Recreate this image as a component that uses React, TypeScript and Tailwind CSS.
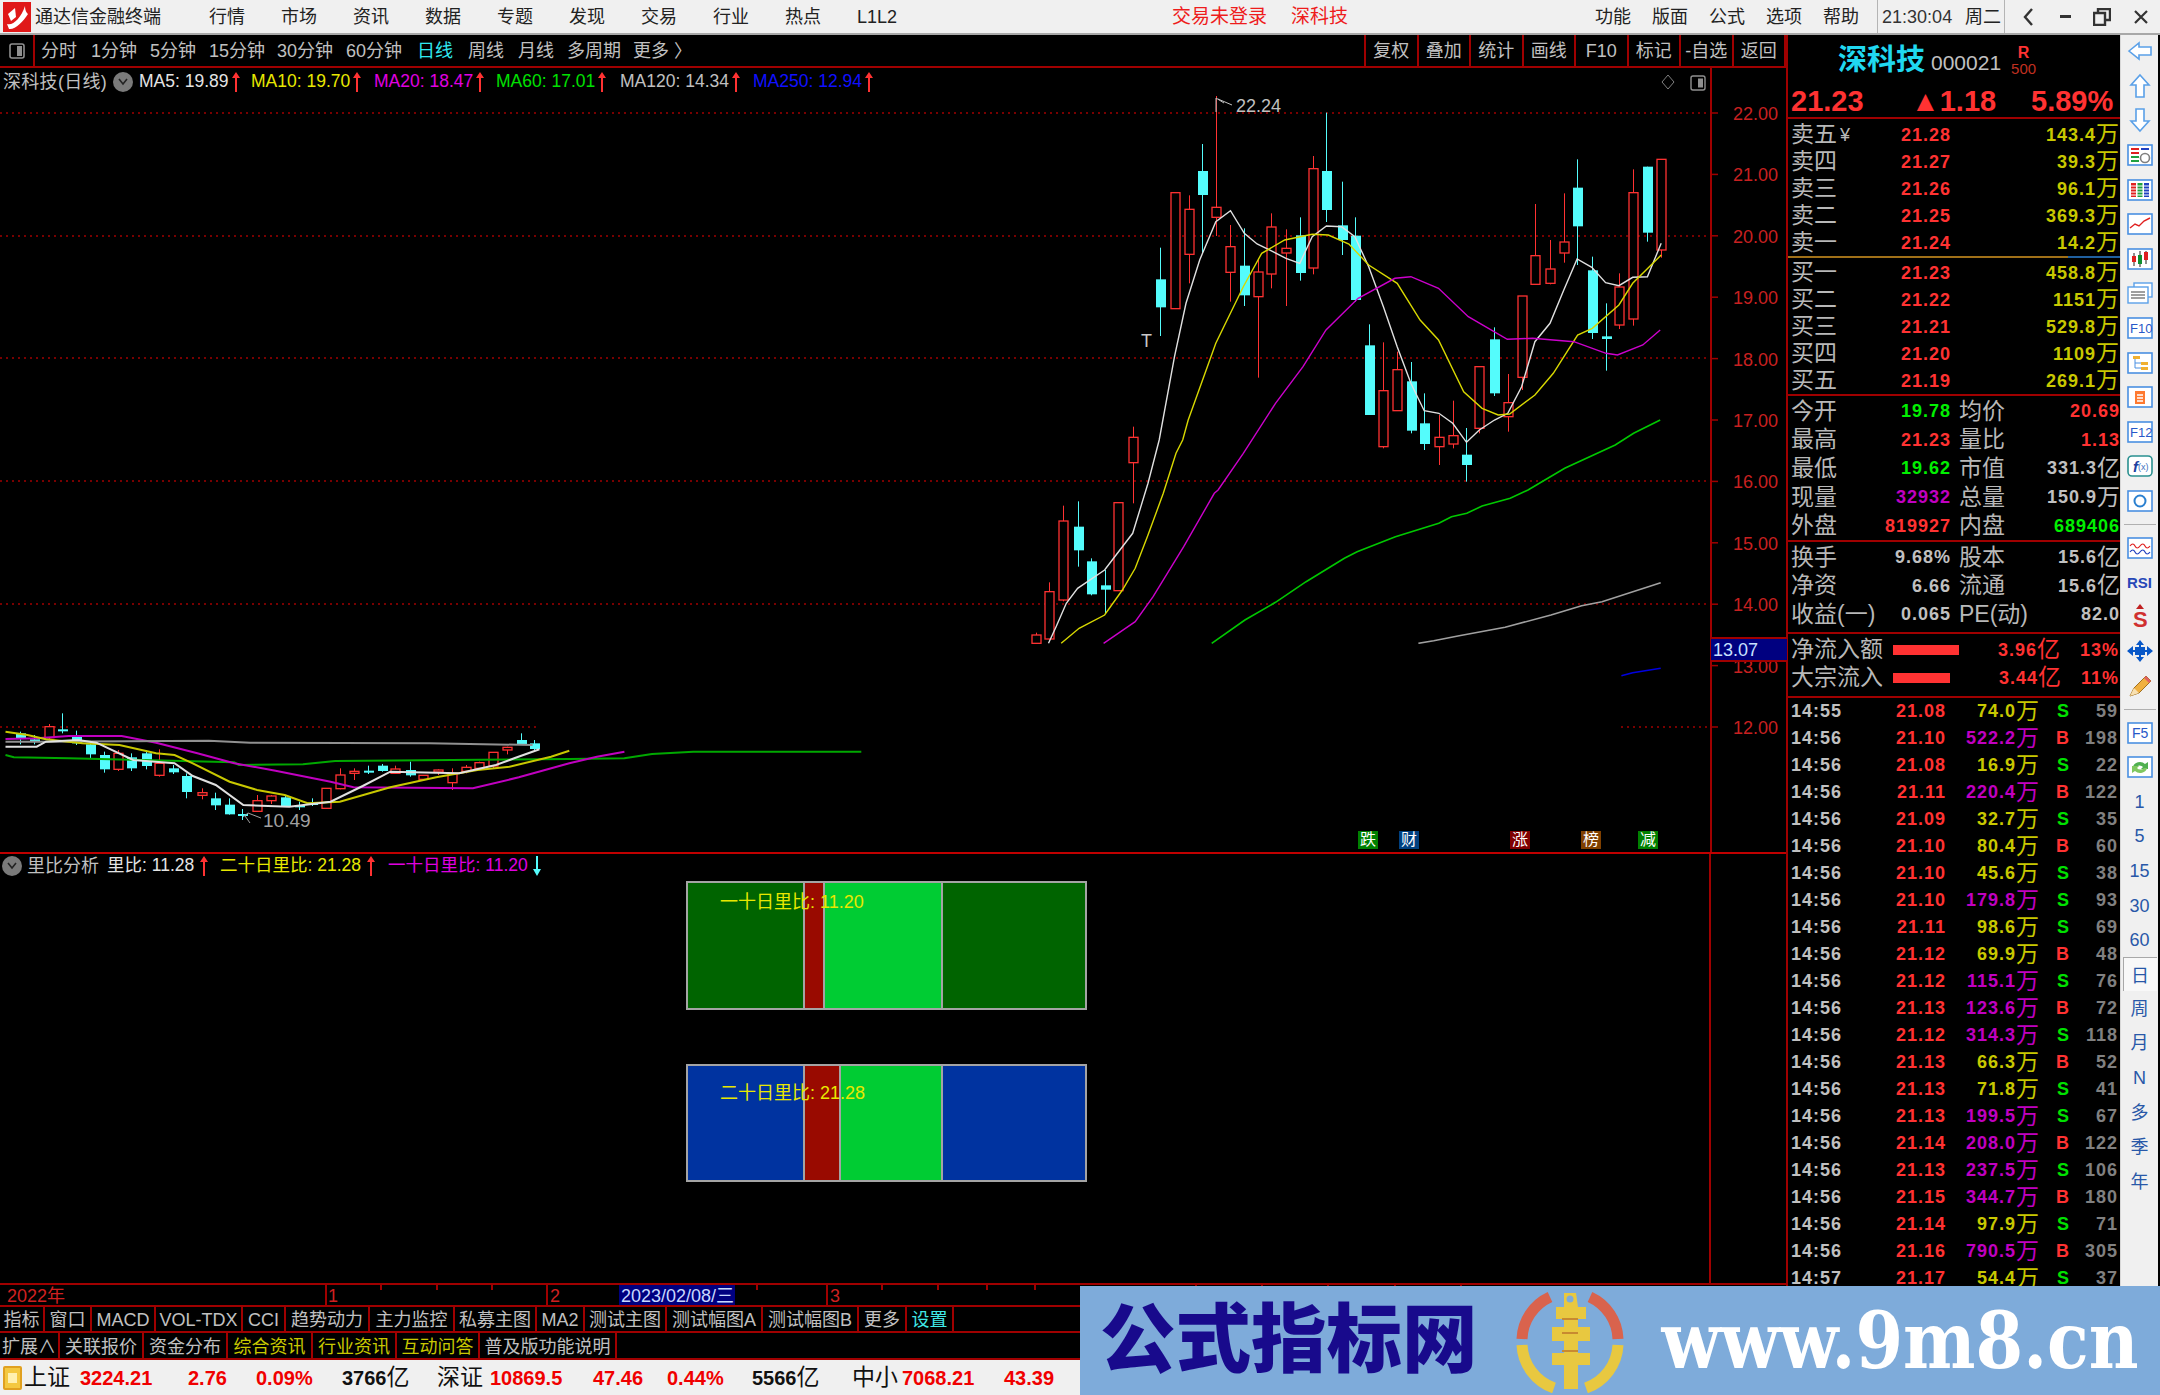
import type { ReactNode } from "react";

const RED_LINE = "border-[#a00000]";
const z4 = (p: number[]) => [1000 + p[0] / 2.178, 90 + p[1] / 3];
const z5 = (p: number[]) => [1000 + p[0] / 1.96, 440 + p[1] / 3];
const z6 = (p: number[]) => [p[0] / 2.178, 700 + p[1] / 3];
const pts = (list: number[][]) => list.map((p) => `${p[0].toFixed(1)},${p[1].toFixed(1)}`).join(" ");

type Candle = [number, number, number, number, number, "r" | "c"];

const upper: Candle[] = [
  [349, 473, 568, 652, 738, "c"], [381, 308, 308, 656, 656, "r"], [411, 316, 358, 493, 580, "r"],
  [440, 162, 243, 315, 490, "c"], [470, 18, 352, 382, 438, "r"], [502, 405, 470, 547, 635, "r"],
  [532, 415, 527, 616, 648, "c"], [562, 505, 546, 620, 863, "r"], [591, 370, 411, 552, 595, "r"],
  [623, 418, 475, 489, 648, "r"], [653, 382, 436, 549, 572, "c"], [682, 198, 236, 534, 553, "r"],
  [711, 68, 243, 360, 396, "c"], [744, 275, 406, 450, 495, "c"], [773, 382, 437, 630, 635, "c"],
  [803, 703, 766, 975, 975, "c"], [835, 757, 902, 1070, 1075, "r"], [865, 785, 839, 962, 962, "r"],
  [895, 816, 874, 1022, 1030, "c"], [924, 910, 1000, 1062, 1080, "c"], [956, 975, 1042, 1070, 1125, "r"],
  [986, 932, 1037, 1062, 1075, "r"], [1016, 1014, 1094, 1125, 1175, "c"], [1044, 830, 830, 1015, 1030, "r"],
  [1077, 712, 748, 910, 918, "c"], [1106, 852, 938, 980, 1025, "r"], [1136, 618, 618, 862, 900, "r"],
  [1165, 342, 497, 583, 583, "r"], [1198, 450, 537, 580, 583, "r"], [1228, 310, 456, 489, 518, "r"],
  [1257, 208, 293, 409, 525, "c"], [1289, 500, 541, 729, 747, "c"], [1319, 640, 739, 747, 842, "c"],
  [1348, 550, 591, 705, 717, "r"], [1378, 238, 308, 687, 707, "r"], [1410, 230, 230, 428, 455, "c"],
  [1440, 208, 208, 480, 503, "r"], [290, 1010, 1042, 1118, 1240, "r"],
];

const upperEarly: Candle[] = [
  [70, 578, 585, 610, 610, "r"], [96, 427, 455, 597, 598, "r"], [123, 197, 243, 480, 484, "r"],
  [152, 184, 260, 331, 380, "c"], [179, 355, 364, 463, 466, "c"], [206, 390, 436, 449, 520, "c"],
  [231, 188, 188, 452, 453, "r"],
];

const lower: Candle[] = [
  [43, 95, 100, 115, 133, "c"], [73, 105, 118, 125, 133, "c"], [106, 72, 80, 113, 117, "r"],
  [135, 40, 88, 94, 100, "c"], [165, 92, 110, 130, 135, "c"], [197, 125, 133, 163, 175, "c"],
  [227, 155, 165, 208, 218, "c"], [256, 150, 160, 208, 213, "r"], [285, 160, 172, 205, 213, "c"],
  [318, 150, 160, 198, 208, "c"], [347, 148, 190, 226, 230, "r"], [377, 195, 205, 217, 222, "c"],
  [406, 220, 228, 276, 295, "c"], [439, 265, 278, 286, 298, "r"], [468, 278, 295, 316, 330, "c"],
  [498, 295, 314, 343, 344, "c"], [528, 327, 342, 345, 360, "c"], [560, 285, 302, 334, 335, "r"],
  [590, 285, 288, 302, 312, "r"], [620, 285, 292, 319, 320, "c"], [651, 305, 315, 322, 330, "c"],
  [680, 295, 308, 315, 318, "c"], [710, 265, 265, 325, 325, "r"], [740, 205, 225, 266, 268, "r"],
  [771, 205, 214, 220, 240, "r"], [801, 197, 212, 216, 222, "c"], [832, 192, 197, 213, 215, "c"],
  [861, 197, 207, 220, 222, "r"], [892, 185, 210, 226, 230, "c"], [922, 226, 226, 238, 240, "r"],
  [953, 208, 210, 216, 225, "r"], [985, 205, 220, 248, 270, "r"], [1014, 195, 202, 214, 220, "r"],
  [1044, 185, 188, 205, 210, "r"], [1073, 157, 157, 198, 205, "r"], [1104, 140, 142, 150, 163, "r"],
  [1134, 100, 120, 133, 135, "c"], [1163, 120, 130, 147, 150, "c"],
];

const white4 = [[320,1200],[350,1000],[380,800],[405,640],[435,510],[470,395],[502,362],[532,430],[560,462],[590,482],[623,505],[653,520],[680,440],[711,408],[744,410],[773,440],[803,530],[835,650],[865,770],[895,880],[924,962],[956,970],[986,1000],[1016,1057],[1044,1020],[1077,990],[1106,970],[1136,890],[1165,755],[1198,700],[1228,600],[1257,507],[1289,532],[1319,578],[1348,587],[1378,562],[1410,560],[1440,460]];
const white5 = [[95,610],[110,560],[130,490],[152,445],[205,390],[260,280],[290,130],[312,0]];
const yellow4 = [[360,1200],[410,990],[470,760],[530,590],[570,490],[620,450],[680,433],[715,435],[760,462],[803,525],[865,580],[915,690],[955,750],[1010,905],[1050,955],[1085,975],[1110,972],[1165,915],[1205,850],[1258,735],[1290,715],[1348,645],[1378,580],[1440,495]];
const yellow5 = [[120,610],[155,565],[205,525],[240,450],[265,385],[290,285],[320,160],[345,40],[358,0]];
const magenta4 = [[475,1200],[530,1090],[600,940],[660,830],[710,720],[780,625],[860,565],[895,560],[955,595],[1020,680],[1105,748],[1160,745],[1250,755],[1320,790],[1345,795],[1400,765],[1438,720]];
const magenta5 = [[203,610],[265,545],[300,470],[360,320],[420,160]];
const green5 = [[415,610],[480,540],[540,487],[600,425],[675,355],[700,335],[775,290],[860,250],[885,230],[915,220],[945,198],[1000,175]];
const green4 = [[1150,1200],[1230,1135],[1340,1065],[1380,1030],[1438,990]];
const gray5 = [[820,610],[850,602],[900,587],[990,562],[1080,525],[1140,497],[1180,485],[1295,428]];
const blue5 = [[1218,707],[1240,698],[1295,685]];

const lowWhite = [[12,140],[80,140],[100,125],[170,120],[210,128],[290,180],[380,190],[420,228],[470,255],[530,315],[630,320],[720,305],[790,258],[850,215],[1000,220],[1080,195],[1120,175],[1175,148]];
const lowYellow = [[12,95],[60,105],[100,118],[180,130],[260,135],[340,160],[380,165],[420,190],[500,245],[560,270],[620,285],[670,310],[740,305],[850,262],[950,232],[1040,210],[1110,200],[1200,170],[1240,152]];
const lowMagenta = [[12,117],[80,115],[150,108],[265,108],[340,128],[430,160],[510,190],[600,212],[720,245],[770,262],[1030,265],[1130,232],[1240,190],[1300,170],[1360,155]];
const lowGreen = [[12,165],[30,172],[150,175],[510,187],[520,195],[660,193],[730,183],[1240,177],[1360,175],[1420,162],[1510,155],[1568,155],[1876,155]];
const lowGray = [[12,125],[100,125],[455,122],[545,128],[935,130],[1160,135]];

const axis = [22, 21, 20, 19, 18, 17, 16, 15, 14, 13, 12];
const yOf = (v: number) => 113 + (22 - v) * 61.4;

function Candles({ data, map }: { data: Candle[]; map: (p: number[]) => number[] }) {
  return (
    <>
      {data.map(([x, wt, t, b, wb, kind], i) => {
        const [px, wy1] = map([x, wt]);
        const ty = map([x, t])[1];
        const by = map([x, b])[1];
        const wy2 = map([x, wb])[1];
        const cx = Math.round(px) + 0.5;
        const up = kind === "r";
        const color = up ? "#ff3232" : "#54fcfc";
        return (
          <g key={i}>
            <line x1={cx} x2={cx} y1={wy1} y2={wy2} stroke={color} strokeWidth={1} />
            <rect
              x={cx - 4.5}
              y={ty}
              width={up ? 9 : 10}
              height={Math.max(by - ty, 2)}
              fill={up ? "#000" : color}
              stroke={up ? color : "none"}
              strokeWidth={1.3}
            />
          </g>
        );
      })}
    </>
  );
}

function PriceChart() {
  return (
    <svg className="absolute inset-0" width={1788} height={784} viewBox="0 68 1788 784">
      <defs>
        <clipPath id="upperClip">
          <rect x="1000" y="68" width="711" height="576" />
        </clipPath>
      </defs>
      {[113, 236, 358, 481, 604].map((y) => (
        <line key={y} x1={0} x2={1711} y1={y} y2={y} stroke="#a00000" strokeWidth={1.5} strokeDasharray="2 4" />
      ))}
      <line x1={1621} x2={1711} y1={727} y2={727} stroke="#a00000" strokeWidth={1.5} strokeDasharray="2 4" />

      <g clipPath="url(#upperClip)">
        <Candles data={upper} map={z4} />
        <Candles data={upperEarly} map={z5} />
        <polyline points={pts([...white5.map(z5), ...white4.slice(2).map(z4)])} fill="none" stroke="#e0e0e0" strokeWidth={1.4} />
        <polyline points={pts([...yellow5.map(z5), ...yellow4.slice(1).map(z4)])} fill="none" stroke="#d8d800" strokeWidth={1.4} />
        <polyline points={pts([...magenta5.map(z5), ...magenta4.map(z4)])} fill="none" stroke="#cc00cc" strokeWidth={1.4} />
        <polyline points={pts([...green5.map(z5), ...green4.map(z4)])} fill="none" stroke="#00c800" strokeWidth={1.6} />
        <polyline points={pts(gray5.map(z5))} fill="none" stroke="#a0a0a0" strokeWidth={1.6} />
      </g>
      <polyline points={pts(blue5.map(z5))} fill="none" stroke="#0000e0" strokeWidth={1.6} />

      <line x1={0} x2={537} y1={727} y2={727} stroke="#a00000" strokeWidth={1.5} strokeDasharray="2 4" />
      <Candles data={lower} map={z6} />
      <polyline points={pts(lowGreen.map(z6))} fill="none" stroke="#00a800" strokeWidth={2} />
      <polyline points={pts(lowMagenta.map(z6))} fill="none" stroke="#c000c0" strokeWidth={2} />
      <polyline points={pts(lowGray.map(z6))} fill="none" stroke="#909090" strokeWidth={2} />
      <polyline points={pts(lowYellow.map(z6))} fill="none" stroke="#c8c800" strokeWidth={2} />
      <polyline points={pts(lowWhite.map(z6))} fill="none" stroke="#e0e0e0" strokeWidth={2} />

      <polyline points="1216,112 1216,98 1224,103" fill="none" stroke="#c0c0c0" strokeWidth={1} />
      <line x1={1218} x2={1232} y1={99} y2={105} stroke="#c0c0c0" strokeWidth={1} />
      <text x={1236} y={112} fontSize={18} fill="#c0c0c0">22.24</text>
      <text x={1141} y={347} fontSize={18} fill="#c8c8c8">T</text>
      <polyline points="243,817 248,813 261,818" fill="none" stroke="#a0a0a0" strokeWidth={1} />
      <polyline points="245,816 250,823" fill="none" stroke="#a0a0a0" strokeWidth={1} />
      <text x={263} y={827} fontSize={19} fill="#a0a0a0">10.49</text>

      <line x1={1711} x2={1711} y1={68} y2={852} stroke="#a00000" strokeWidth={2} />
      {axis.map((v) => (
        <g key={v}>
          <line x1={1711} x2={1718} y1={yOf(v)} y2={yOf(v)} stroke="#a00000" strokeWidth={1.5} />
          <text x={1733} y={yOf(v) + 7} fontSize={18} fill="#c82020">{v.toFixed(2)}</text>
        </g>
      ))}
      <path d="M1668 75 l6 7 l-6 7 l-6 -7 z" fill="none" stroke="#808080" strokeWidth={1} />
      <rect x="1691" y="76" width="14" height="14" rx="2" fill="none" stroke="#909090" strokeWidth={1.4} />
      <rect x="1698" y="78.5" width="5" height="9" fill="#909090" />
    </svg>
  );
}

function Down({ size = "w-[20px] h-[20px]" }: { size?: string }) {
  return (
    <span className={`inline-flex items-center justify-center rounded-full bg-[#7a7a7a] ${size}`}>
      <svg width="12" height="10" viewBox="0 0 12 10">
        <path d="M2 2 L6 7 L10 2" fill="none" stroke="#222" strokeWidth={1.6} />
      </svg>
    </span>
  );
}

function Arrow({ dir, color }: { dir: "up" | "down"; color: string }) {
  return (
    <svg width="8" height="20" viewBox="0 0 8 20" className="shrink-0">
      {dir === "up" ? (
        <path d="M4 0 L8 6 H5 V20 H3 V6 H0 Z" fill={color} />
      ) : (
        <path d="M4 20 L8 13 H5 V0 H3 V13 H0 Z" fill={color} />
      )}
    </svg>
  );
}

const legends = [
  { label: "MA5: 19.89", cls: "text-[#e4e4e4] w-[112px]" },
  { label: "MA10: 19.70", cls: "text-[#e8e800] w-[123px]" },
  { label: "MA20: 18.47", cls: "text-[#e000e0] w-[122px]" },
  { label: "MA60: 17.01", cls: "text-[#00e000] w-[124px]" },
  { label: "MA120: 14.34", cls: "text-[#c0c0c0] w-[133px]" },
  { label: "MA250: 12.94", cls: "text-[#1010ff] w-[130px]" },
];

const badges = [
  { t: "跌", x: "ml-[1358px]", bg: "bg-[#008000]" },
  { t: "财", x: "ml-[21px]", bg: "bg-[#004080]" },
  { t: "涨", x: "ml-[91px]", bg: "bg-[#800000]" },
  { t: "榜", x: "ml-[51px]", bg: "bg-[#804000]" },
  { t: "减", x: "ml-[37px]", bg: "bg-[#008000]" },
];

function MainPane() {
  return (
    <div className="relative h-[784px] shrink-0">
      <PriceChart />
      <div className="absolute left-0 top-[1px] flex h-[26px] items-center text-[17.5px] leading-none">
        <span className="ml-[3px] w-[110px] whitespace-nowrap text-[18px] tracking-[0.3px] text-[#c0c0c0]">深科技(日线)</span>
        <Down />
        <div className="ml-[6px] flex items-center">
          {legends.map((l) => (
            <div key={l.label} className={`flex items-center gap-[3px] whitespace-nowrap ${l.cls}`}>
              <span>{l.label}</span>
              <Arrow dir="up" color="#ff3232" />
            </div>
          ))}
        </div>
      </div>
      <div className="absolute left-0 top-[763px] flex">
        {badges.map((b) => (
          <span key={b.t} className={`flex h-[18px] w-[20px] items-center justify-center text-[16px] leading-none text-white ${b.x} ${b.bg}`}>
            {b.t}
          </span>
        ))}
      </div>
      <div className="absolute left-[1711px] top-[569px] flex h-[25px] w-[76px] items-center border-y-2 border-[#a00000] bg-[#000080] pl-[2px] text-[18px] leading-none text-[#c8e0ff]">
        13.07
      </div>
    </div>
  );
}

function RatioBox({ side, mid, label, accent, box, labelTop }: { side: string; mid: string; label: string; accent: string; box: string; labelTop: string }) {
  return (
    <div className={`relative flex w-[401px] border-2 border-[#a4a4a4] ${box} ${side}`}>
      <div className={`w-[117px] shrink-0 border-r-2 border-[#a4a4a4] ${side}`} />
      <div className={`shrink-0 border-r-2 border-[#a4a4a4] bg-[#990a00] ${accent}`} />
      <div className={`shrink-0 border-r-2 border-[#a4a4a4] bg-[#00cc33] ${mid}`} />
      <div className={`flex-1 ${side}`} />
      <span className={`absolute left-[32px] whitespace-nowrap text-[18px] leading-[22px] text-[#e8e800] ${labelTop}`}>{label}</span>
    </div>
  );
}

function SubPane() {
  return (
    <div className="relative flex h-[431px] shrink-0 border-t-2 border-[#c00000]">
      <div className="w-[1711px] shrink-0 border-r-2 border-[#a00000]">
        <div className="flex h-[24px] items-center text-[17.5px] leading-none">
          <span className="ml-[2px] mr-[5px]"><Down /></span>
          <span className="w-[80px] text-[18px] text-[#c0c0c0]">里比分析</span>
          <span className="flex w-[113px] items-center gap-[6px] text-[#e4e4e4]">
            <span className="whitespace-nowrap">里比: 11.28</span>
            <Arrow dir="up" color="#ff3232" />
          </span>
          <span className="flex w-[168px] items-center gap-[6px] text-[#e8e800]">
            <span className="whitespace-nowrap">二十日里比: 21.28</span>
            <Arrow dir="up" color="#ff3232" />
          </span>
          <span className="flex items-center gap-[5px] text-[#e000e0]">
            <span className="whitespace-nowrap">一十日里比: 11.20</span>
            <Arrow dir="down" color="#54fcfc" />
          </span>
        </div>
        <div className="ml-[686px] mt-[3px] flex flex-col gap-[54px]">
          <RatioBox box="h-[129px]" side="bg-[#006400]" accent="w-[20px]" mid="w-[118px]" label="一十日里比: 11.20" labelTop="top-[8px]" />
          <RatioBox box="h-[118px]" side="bg-[#0033a0]" accent="w-[36px]" mid="w-[102px]" label="二十日里比: 21.28" labelTop="top-[16px]" />
        </div>
      </div>
    </div>
  );
}

function TimeAxis() {
  const ticks = [380, 436, 491, 756, 881, 937, 986, 1034, 1195, 1261, 1327, 1394, 1460];
  return (
    <div className="relative flex h-[22px] shrink-0 items-center border-t-2 border-[#a00000] text-[18px] leading-none text-[#d02020]">
      <span className="ml-[7px] w-[318px] pt-[1px]">2022年</span>
      <span className="h-full w-[221px] border-l-2 border-[#a00000] pl-[1px] pt-[2px]">1</span>
      <span className="h-full w-[73px] border-l-2 border-[#a00000] pl-[2px] pt-[2px]">2</span>
      <span className="flex h-full w-[116px] items-center bg-[#000080] pl-[2px] pt-[1px] text-[#c8d8ff]">2023/02/08/三</span>
      <span className="ml-[91px] h-full border-l-2 border-[#a00000] pl-[2px] pt-[2px]">3</span>
      {ticks.map((x) => (
        <svg key={x} className="absolute top-0" width="2" height="5" style={{ left: x }}>
          <rect width="2" height="5" fill="#a00000" />
        </svg>
      ))}
    </div>
  );
}

const row1 = [
  { t: "指标", w: "w-[45px]", c: "" },
  { t: "窗口", w: "w-[47px]", c: "" },
  { t: "MACD", w: "w-[64px]", c: "" },
  { t: "VOL-TDX", w: "w-[87px]", c: "" },
  { t: "CCI", w: "w-[43px]", c: "" },
  { t: "趋势动力", w: "w-[84px]", c: "" },
  { t: "主力监控", w: "w-[85px]", c: "" },
  { t: "私募主图", w: "w-[82px]", c: "" },
  { t: "MA2", w: "w-[48px]", c: "" },
  { t: "测试主图", w: "w-[82px]", c: "" },
  { t: "测试幅图A", w: "w-[96px]", c: "" },
  { t: "测试幅图B", w: "w-[96px]", c: "" },
  { t: "更多", w: "w-[48px]", c: "" },
  { t: "设置", w: "w-[47px]", c: "text-[#40e8e8]" },
];

const row2 = [
  { t: "扩展∧", w: "w-[60px]", c: "" },
  { t: "关联报价", w: "w-[84px]", c: "" },
  { t: "资金分布", w: "w-[84px]", c: "" },
  { t: "综合资讯", w: "w-[85px]", c: "text-[#c8c800]" },
  { t: "行业资讯", w: "w-[84px]", c: "text-[#c8c800]" },
  { t: "互动问答", w: "w-[83px]", c: "text-[#c8c800]" },
  { t: "普及版功能说明", w: "w-[137px]", c: "" },
];

function TabRow({ items, h }: { items: typeof row1; h: string }) {
  return (
    <div className={`flex shrink-0 border-t-2 text-[18px] leading-none text-[#c0c0c0] ${RED_LINE} ${h}`}>
      {items.map((it) => (
        <span key={it.t} className={`flex items-center justify-center whitespace-nowrap border-r-2 pt-[2px] ${RED_LINE} ${it.w} ${it.c}`}>
          {it.t}
        </span>
      ))}
    </div>
  );
}

const indexes = [
  { name: "上证", nameCls: "ml-[2px] w-[56px]", v: ["3224.21", "2.76", "0.09%"], amt: "3766", w: ["w-[108px]", "w-[68px]", "w-[86px]"], amtCls: "w-[95px]" },
  { name: "深证", nameCls: "w-[53px]", v: ["10869.5", "47.46", "0.44%"], amt: "5566", w: ["w-[103px]", "w-[74px]", "w-[85px]"], amtCls: "w-[100px]" },
  { name: "中小", nameCls: "w-[50px]", v: ["7068.21", "43.39"], amt: "", w: ["w-[102px]", "w-[53px]"], amtCls: "" },
];

function StatusBar() {
  return (
    <div className="flex h-[35px] shrink-0 items-center bg-[#f0f0f0] text-[20px] leading-none">
      <span className="ml-[3px] flex h-[24px] w-[19px] shrink-0 items-center justify-center rounded-[2px] border-2 border-[#e0a020] bg-[#f4c840]">
        <span className="h-[10px] w-[9px] bg-[#fff0b0]" />
      </span>
      {indexes.map((ix) => (
        <div key={ix.name} className="flex items-center">
          <span className={`text-[23px] text-[#111] ${ix.nameCls}`}>{ix.name}</span>
          {ix.v.map((val, i) => (
            <span key={val} className={`font-bold text-[#f00000] ${ix.w[i]}`}>{val}</span>
          ))}
          {ix.amt && (
            <span className={`flex items-center font-bold text-[#111] ${ix.amtCls}`}>
              {ix.amt}
              <span className="text-[23px] font-normal">亿</span>
            </span>
          )}
        </div>
      ))}
    </div>
  );
}

const sells = [
  ["卖五", "21.28", "143.4"], ["卖四", "21.27", "39.3"], ["卖三", "21.26", "96.1"], ["卖二", "21.25", "369.3"], ["卖一", "21.24", "14.2"],
];
const buys = [
  ["买一", "21.23", "458.8"], ["买二", "21.22", "1151"], ["买三", "21.21", "529.8"], ["买四", "21.20", "1109"], ["买五", "21.19", "269.1"],
];

const RED = "text-[#ff3232]";
const GRN = "text-[#00f000]";
const GRY = "text-[#c0c0c0]";
const PUR = "text-[#c000c0]";

const infoA = [
  ["今开", "19.78", GRN, "均价", "20.69", RED, ""],
  ["最高", "21.23", RED, "量比", "1.13", RED, ""],
  ["最低", "19.62", GRN, "市值", "331.3", GRY, "亿"],
  ["现量", "32932", PUR, "总量", "150.9", GRY, "万"],
  ["外盘", "819927", RED, "内盘", "689406", GRN, ""],
];
const infoB = [
  ["换手", "9.68%", GRY, "股本", "15.6", GRY, "亿"],
  ["净资", "6.66", GRY, "流通", "15.6", GRY, "亿"],
  ["收益(一)", "0.065", GRY, "PE(动)", "82.0", GRY, ""],
];

const ticks: [string, string, string, "S" | "B", string, boolean][] = [
  ["14:55", "21.08", "74.0", "S", "59", false],
  ["14:56", "21.10", "522.2", "B", "198", true],
  ["14:56", "21.08", "16.9", "S", "22", false],
  ["14:56", "21.11", "220.4", "B", "122", true],
  ["14:56", "21.09", "32.7", "S", "35", false],
  ["14:56", "21.10", "80.4", "B", "60", false],
  ["14:56", "21.10", "45.6", "S", "38", false],
  ["14:56", "21.10", "179.8", "S", "93", true],
  ["14:56", "21.11", "98.6", "S", "69", false],
  ["14:56", "21.12", "69.9", "B", "48", false],
  ["14:56", "21.12", "115.1", "S", "76", true],
  ["14:56", "21.13", "123.6", "B", "72", true],
  ["14:56", "21.12", "314.3", "S", "118", true],
  ["14:56", "21.13", "66.3", "B", "52", false],
  ["14:56", "21.13", "71.8", "S", "41", false],
  ["14:56", "21.13", "199.5", "S", "67", true],
  ["14:56", "21.14", "208.0", "B", "122", true],
  ["14:56", "21.13", "237.5", "S", "106", true],
  ["14:56", "21.15", "344.7", "B", "180", true],
  ["14:56", "21.14", "97.9", "S", "71", false],
  ["14:56", "21.16", "790.5", "B", "305", true],
  ["14:57", "21.17", "54.4", "S", "37", false],
];

const NUM = "font-bold text-[18px] tracking-[1px]";
const CJK = "text-[23px] text-[#b8b8b8] font-normal tracking-normal";

function Unit({ u, color }: { u: string; color?: string }) {
  return <span className={`text-[23px] font-normal tracking-normal ${color ?? ""}`}>{u}</span>;
}

function BookRow({ r, extra }: { r: string[]; extra?: ReactNode }) {
  return (
    <div className="grid h-[27px] grid-cols-[90px_70px_1fr] items-center pl-[3px] pr-[1px] leading-none">
      <span className={`${CJK} flex items-center gap-[3px]`}>{r[0]}{extra}</span>
      <span className={`${NUM} text-right ${RED}`}>{r[1]}</span>
      <span className={`${NUM} flex items-center justify-end text-[#c8c800]`}>{r[2]}<Unit u="万" /></span>
    </div>
  );
}

function InfoRow({ r }: { r: string[] }) {
  return (
    <div className="grid h-[28.6px] grid-cols-[70px_90px_8px_70px_1fr] items-center pl-[3px] leading-none">
      <span className={`${CJK} whitespace-nowrap`}>{r[0]}</span>
      <span className={`${NUM} text-right ${r[2]}`}>{r[1]}</span>
      <span />
      <span className={`${CJK} whitespace-nowrap`}>{r[3]}</span>
      <span className={`${NUM} flex items-center justify-end ${r[5]}`}>{r[4]}{r[6] && <Unit u={r[6]} />}</span>
    </div>
  );
}

function FlowRow({ label, bar, value, pct }: { label: string; bar: string; value: string; pct: string }) {
  return (
    <div className="flex h-[28px] items-center pl-[3px] leading-none">
      <span className={`${CJK} w-[102px] whitespace-nowrap`}>{label}</span>
      <span className={`h-[10px] shrink-0 bg-[#ff3232] ${bar}`} />
      <span className="flex-1" />
      <span className={`${NUM} flex items-center ${RED}`}>{value}<Unit u="亿" /></span>
      <span className={`${NUM} ml-[20px] mr-[1px] ${RED}`}>{pct}</span>
    </div>
  );
}

function QuotePanel() {
  return (
    <div className="flex w-[334px] shrink-0 flex-col border-l-2 border-[#a00000] bg-black">
      <div className="flex h-[50px] items-center pl-[50px]">
        <span className="text-[29px] font-bold leading-none text-[#20d8f0]">深科技</span>
        <span className="ml-[6px] mt-[5px] text-[21px] leading-none text-[#c0c0c0]">000021</span>
        <span className="ml-[10px] flex flex-col items-center leading-none">
          <span className="text-[16px] font-bold text-[#ff3232]">R</span>
          <span className="text-[15px] text-[#c03020]">500</span>
        </span>
      </div>
      <div className={`flex h-[34px] items-center text-[29px] font-bold leading-none ${RED} border-b-2 ${RED_LINE}`}>
        <span className="ml-[3px] w-[120px]">21.23</span>
        <span className="w-[120px]">▲1.18</span>
        <span>5.89%</span>
      </div>
      <div className="pt-[2px]">
        {sells.map((r, i) => (
          <BookRow key={r[0]} r={r} extra={i === 0 ? <span className="text-[18px]">¥</span> : undefined} />
        ))}
      </div>
      <div className="flex h-[2px]">
        <div className="w-[280px] bg-[#a07018]" />
        <div className="flex-1 bg-[#2060a0]" />
      </div>
      <div className="pt-[1px]">
        {buys.map((r) => <BookRow key={r[0]} r={r} />)}
      </div>
      <div className={`border-b-2 ${RED_LINE}`} />
      <div className={`border-b-2 pt-[1px] ${RED_LINE}`}>
        {infoA.map((r) => <InfoRow key={r[0]} r={r} />)}
      </div>
      <div className={`border-b-2 pb-[3px] pt-[1px] ${RED_LINE}`}>
        {infoB.map((r) => <InfoRow key={r[0]} r={r} />)}
      </div>
      <div className={`border-b-2 pb-[4px] pt-[2px] ${RED_LINE}`}>
        <FlowRow label="净流入额" bar="w-[66px]" value="3.96" pct="13%" />
        <FlowRow label="大宗流入" bar="w-[57px]" value="3.44" pct="11%" />
      </div>
      {ticks.map(([t, p, v, side, n, big], i) => (
        <div key={i} className="grid h-[27px] shrink-0 grid-cols-[75px_80px_93px_38px_1fr] items-center pl-[3px] pr-[2px] leading-none">
          <span className={`${NUM} ${GRY}`}>{t}</span>
          <span className={`${NUM} text-right ${RED}`}>{p}</span>
          <span className={`${NUM} flex items-center justify-end ${big ? PUR : "text-[#c8c800]"}`}>
            {v}<Unit u="万" color={big ? PUR : "text-[#c8c800]"} />
          </span>
          <span className={`${NUM} pr-[7px] text-right ${side === "S" ? "text-[#00e000]" : "text-[#ff3232]"}`}>{side}</span>
          <span className={`${NUM} text-right text-[#808080]`}>{n}</span>
        </div>
      ))}
    </div>
  );
}

function ToolBox({ children }: { children: ReactNode }) {
  return (
    <svg width="26" height="24" viewBox="0 0 26 24">
      <rect x="1" y="2" width="24" height="20" fill="#fff" stroke="#4a90e2" strokeWidth={1.6} />
      {children}
    </svg>
  );
}

const Slot = ({ children }: { children: ReactNode }) => (
  <div className="flex h-[34.6px] shrink-0 items-center justify-center">{children}</div>
);

const TextTool = ({ t }: { t: string }) => (
  <Slot><span className="text-[18px] leading-none text-[#2858a8]">{t}</span></Slot>
);

const Hollow = ({ d, w = 26, h = 26 }: { d: string; w?: number; h?: number }) => (
  <svg width={w} height={h} viewBox="0 0 26 26">
    <path d={d} fill="#fff" stroke="#5aa0e8" strokeWidth={1.6} />
  </svg>
);

function SideBar() {
  return (
    <div className="flex w-[38px] shrink-0 flex-col items-center border-l border-[#d8d8d8] bg-[#f0f0f0]">
      <div className="-mt-[1px]">
        <Slot><Hollow d="M2 13 L12 5 V9 H24 V17 H12 V21 Z" /></Slot>
      </div>
      <Slot><Hollow d="M13 2 L22 12 H17 V24 H9 V12 H4 Z" /></Slot>
      <Slot><Hollow d="M13 24 L22 14 H17 V2 H9 V14 H4 Z" /></Slot>
      <Slot><ToolBox><path d="M4 5h8v2H4zM4 9h8v2H4z" fill="#e02020" /><path d="M4 13h8v2H4zM4 17h8v2H4z" fill="#20a040" /><path d="M14 5h8v2h-8z" fill="#2040c0" /><circle cx="18" cy="15" r="4.5" fill="none" stroke="#808080" strokeWidth={1.6} /></ToolBox></Slot>
      <Slot><ToolBox><path d="M4 5h5v14H4z" fill="#e02020" /><path d="M10.5 5h5v14h-5z" fill="#20a040" /><path d="M17 5h5v14h-5z" fill="#2040c0" /><path d="M3 8h20M3 11h20M3 14h20M3 17h20" stroke="#fff" strokeWidth={1} /></ToolBox></Slot>
      <Slot><ToolBox><path d="M3 16 L8 12 L12 14 L17 9 L23 6" fill="none" stroke="#e02020" strokeWidth={1.4} /></ToolBox></Slot>
      <Slot><ToolBox><path d="M7 6v13M13 4v16M19 4v13" stroke="#222" strokeWidth={1} /><rect x="5" y="9" width="4" height="6" fill="#e02020" /><rect x="11" y="8" width="4" height="9" fill="#109030" /><rect x="17" y="5" width="4" height="8" fill="#e02020" /></ToolBox></Slot>
      <Slot>
        <svg width="26" height="24" viewBox="0 0 26 24">
          <rect x="7" y="2" width="18" height="14" fill="#fff" stroke="#5aa0e8" strokeWidth={1.4} />
          <rect x="1" y="6" width="20" height="16" fill="#fff" stroke="#5aa0e8" strokeWidth={1.4} />
          <path d="M4 11h14M4 14h14M4 17h14" stroke="#808080" strokeWidth={1.3} />
        </svg>
      </Slot>
      <Slot><ToolBox><text x="3" y="17" fontSize="13" fill="#2858c8">F10</text></ToolBox></Slot>
      <Slot><ToolBox><path d="M6 5h7v3H6zM14 11h7v3h-7zM14 16h7v3h-7z" fill="#f0b030" /><path d="M8 8v9h6M8 12h6" fill="none" stroke="#4a90e2" strokeWidth={1} /></ToolBox></Slot>
      <Slot><ToolBox><path d="M8 6h10v13H8z" fill="#ff7a30" /><path d="M10 10h6M10 13h6M10 16h6" stroke="#fff" strokeWidth={1.3} /></ToolBox></Slot>
      <Slot><ToolBox><text x="3" y="17" fontSize="13" fill="#2858c8">F12</text></ToolBox></Slot>
      <Slot>
        <svg width="26" height="24" viewBox="0 0 26 24">
          <rect x="1" y="2" width="24" height="20" rx="4" fill="#fff" stroke="#2a9090" strokeWidth={1.6} />
          <text x="6" y="18" fontSize="15" fontStyle="italic" fontWeight="bold" fill="#2040a0">f</text>
          <text x="11" y="16" fontSize="9" fill="#4070c0">(x)</text>
        </svg>
      </Slot>
      <Slot><ToolBox><circle cx="13" cy="12" r="5.5" fill="none" stroke="#2a80d0" strokeWidth={2} /></ToolBox></Slot>
      <div className="mb-[5px] mt-[6px] h-[1px] w-[32px] shrink-0 bg-[#b0b0b0]" />
      <Slot><ToolBox><path d="M3 10 q3 -4 5 0 t5 0 t5 0 t5 0" fill="none" stroke="#e02020" strokeWidth={1.2} /><path d="M3 16 q3 -4 5 0 t5 0 t5 0 t5 0" fill="none" stroke="#2040c0" strokeWidth={1.2} /></ToolBox></Slot>
      <Slot><span className="text-[15px] font-bold leading-none text-[#2848b8]">RSI</span></Slot>
      <Slot>
        <svg width="24" height="28" viewBox="0 0 24 28">
          <path d="M12 1 L16 6 H8 Z" fill="#c02020" />
          <text x="5" y="24" fontSize="22" fontWeight="bold" fill="#d03030">S</text>
        </svg>
      </Slot>
      <Slot>
        <svg width="28" height="24" viewBox="0 0 28 24">
          <path d="M14 1 L18 6 H10 Z M14 23 L18 18 H10 Z M1 12 L7 7 V17 Z M27 12 L21 7 V17 Z" fill="#0858c8" />
          <rect x="9" y="8" width="10" height="8" fill="#0858c8" />
          <path d="M6 12 H22 M14 4 V20" stroke="#0858c8" strokeWidth={2} />
        </svg>
      </Slot>
      <Slot>
        <svg width="26" height="26" viewBox="0 0 26 26">
          <path d="M3 23 L7 15 L19 3 L24 8 L12 20 Z" fill="#f0b040" stroke="#a07020" strokeWidth={1} />
          <path d="M19 3 L24 8 L22 10 L17 5 Z" fill="#e06060" />
          <path d="M3 23 L7 15 L12 20 Z" fill="#f8e0b0" />
        </svg>
      </Slot>
      <div className="mb-[5px] mt-[6px] h-[1px] w-[32px] shrink-0 bg-[#b0b0b0]" />
      <Slot><ToolBox><text x="5" y="17" fontSize="14" fill="#2858c8">F5</text></ToolBox></Slot>
      <Slot><ToolBox><path d="M6 12 a7 6 0 0 1 12 -3 l3 -2 v7 h-7 l2 -2 a4 3 0 0 0 -7 0z" fill="#50b050" /><path d="M20 13 a7 6 0 0 1 -12 3 l-3 2 v-7 h7 l-2 2 a4 3 0 0 0 7 0z" fill="#80c860" /></ToolBox></Slot>
      <TextTool t="1" />
      <TextTool t="5" />
      <TextTool t="15" />
      <TextTool t="30" />
      <TextTool t="60" />
      <div className="flex h-[34px] w-[34px] shrink-0 items-center justify-center border-l border-t border-[#a8a8a8] bg-[#f8f8f8] pt-[3px]">
        <span className="text-[18px] leading-none text-[#2858a8]">日</span>
      </div>
      <TextTool t="周" />
      <TextTool t="月" />
      <TextTool t="N" />
      <TextTool t="多" />
      <TextTool t="季" />
      <TextTool t="年" />
    </div>
  );
}

function TitleBar() {
  const menus = ["行情", "市场", "资讯", "数据", "专题", "发现", "交易", "行业", "热点", "L1L2"];
  const right = ["功能", "版面", "公式", "选项", "帮助"];
  return (
    <div className="flex h-[35px] shrink-0 items-center border-b-2 border-[#a8a8a8] bg-[#f0f0f0] text-[18px] leading-none text-[#222]">
      <svg width="28" height="30" viewBox="0 0 28 30" className="ml-[3px] shrink-0">
        <rect width="28" height="30" fill="#e01818" />
        <path d="M4 22 C10 24 18 16 22 4 C22 10 25 12 25 12 C20 20 12 28 6 27 Z" fill="#fff" />
        <path d="M5 12 L12 6 L13 15 L8 19 Z" fill="#fff" />
      </svg>
      <span className="ml-[4px] w-[174px] whitespace-nowrap">通达信金融终端</span>
      <div className="flex gap-[36px]">
        {menus.map((m) => <span key={m} className="whitespace-nowrap">{m}</span>)}
      </div>
      <span className="ml-[275px] whitespace-nowrap text-[19px] text-[#ee1c1c]">交易未登录</span>
      <span className="ml-[24px] whitespace-nowrap text-[19px] text-[#ee1c1c]">深科技</span>
      <div className="ml-[247px] flex gap-[21px]">
        {right.map((m) => <span key={m} className="whitespace-nowrap">{m}</span>)}
      </div>
      <span className="ml-[18px] h-[33px] border-l border-[#b4b4b4]" />
      <span className="ml-[4px] w-[83px] whitespace-nowrap text-[#333]">21:30:04</span>
      <span className="w-[39px] whitespace-nowrap">周二</span>
      <span className="h-[33px] border-l border-[#b4b4b4]" />
      <svg width="14" height="20" viewBox="0 0 14 20" className="ml-[17px]"><path d="M10 2 L3 10 L10 18" fill="none" stroke="#333" strokeWidth={2.4} /></svg>
      <span className="ml-[24px] h-[3px] w-[11px] bg-[#333]" />
      <svg width="18" height="18" viewBox="0 0 18 18" className="ml-[22px]"><path d="M1 5h11v12H1z M5 5V1h12v11h-5" fill="none" stroke="#333" strokeWidth={2.4} /></svg>
      <svg width="16" height="16" viewBox="0 0 16 16" className="ml-[22px]"><path d="M2 2 L14 14 M14 2 L2 14" stroke="#333" strokeWidth={2.2} /></svg>
    </div>
  );
}

function PeriodBar() {
  const periods = [
    { t: "分时", w: "w-[50px]" },
    { t: "1分钟", w: "w-[59px]" },
    { t: "5分钟", w: "w-[59px]" },
    { t: "15分钟", w: "w-[68px]" },
    { t: "30分钟", w: "w-[69px]" },
    { t: "60分钟", w: "w-[71px]" },
    { t: "日线", w: "w-[51px] text-[#30e8f0]" },
    { t: "周线", w: "w-[50px]" },
    { t: "月线", w: "w-[49px]" },
    { t: "多周期", w: "w-[66px]" },
    { t: "更多 〉", w: "w-[70px]" },
  ];
  const tools = ["复权", "叠加", "统计", "画线", "F10", "标记", "-自选", "返回"];
  return (
    <div className={`flex h-[33px] shrink-0 items-stretch border-b-2 bg-black text-[18px] leading-none text-[#c0c0c0] ${RED_LINE}`}>
      <div className={`flex w-[35px] shrink-0 items-center justify-center border-r-2 ${RED_LINE}`}>
        <svg width="16" height="16" viewBox="0 0 16 16"><rect x="1" y="1" width="14" height="14" rx="2" fill="none" stroke="#909090" strokeWidth={1.6} /><rect x="8" y="3" width="5" height="10" fill="#909090" /></svg>
      </div>
      <div className="ml-[6px] flex items-center">
        {periods.map((p) => <span key={p.t} className={`whitespace-nowrap ${p.w}`}>{p.t}</span>)}
      </div>
      <div className="flex-1" />
      <div className={`flex border-l-2 ${RED_LINE}`}>
        {tools.map((t) => (
          <span key={t} className={`flex w-[52.5px] items-center justify-center whitespace-nowrap border-r-2 ${RED_LINE}`}>{t}</span>
        ))}
      </div>
    </div>
  );
}

function WatermarkBanner() {
  return (
    <div className="absolute bottom-0 right-0 flex h-[109px] w-[1080px] items-center bg-[#7eabda]">
      <span className="ml-[20px] whitespace-nowrap text-[75.5px] font-black leading-none text-[#180a8c]">公式指标网</span>
      <svg width="112" height="104" viewBox="0 0 112 104" className="ml-[36px] shrink-0">
        <path d="M8 50 A48 48 0 0 1 36 8" fill="none" stroke="#d9634d" strokeWidth={11} />
        <path d="M76 8 A48 48 0 0 1 104 50" fill="none" stroke="#d9634d" strokeWidth={11} />
        <path d="M8 56 A48 48 0 0 0 40 99" fill="none" stroke="#e8c840" strokeWidth={11} />
        <path d="M104 56 A48 48 0 0 1 72 99" fill="none" stroke="#e8c840" strokeWidth={11} />
        <path d="M50 4 h12 l2 14 h8 v12 h-8 v8 h12 v14 h-12 v12 h12 v12 h-12 v24 h-14 v-24 h-12 v-12 h12 v-12 h-12 v-14 h12 v-8 h-8 v-12 h8 Z" fill="#e8c840" />
        <circle cx="56" cy="10" r="3.5" fill="#7eabda" />
        <path d="M48 30 h16 M48 44 h16 M48 62 h16" stroke="#c88a30" strokeWidth={2} />
      </svg>
      <span className="ml-[36px] scale-y-[1.15] whitespace-nowrap font-['DejaVu_Serif',serif] text-[68.5px] font-bold leading-none text-white">www.9m8.cn</span>
    </div>
  );
}

export default function App() {
  return (
    <div className="relative flex h-[1395px] w-[2160px] flex-col overflow-hidden bg-black font-['Liberation_Sans','Noto_Sans_CJK_SC',sans-serif]">
      <TitleBar />
      <div className="flex min-h-0 flex-1">
        <div className="flex w-[1786px] shrink-0 flex-col">
          <PeriodBar />
          <MainPane />
          <SubPane />
          <TimeAxis />
          <TabRow items={row1} h="h-[26px]" />
          <TabRow items={row2} h="h-[27px]" />
          <div className={`border-t-2 ${RED_LINE}`} />
          <StatusBar />
        </div>
        <QuotePanel />
        <SideBar />
      </div>
      <WatermarkBanner />
    </div>
  );
}
